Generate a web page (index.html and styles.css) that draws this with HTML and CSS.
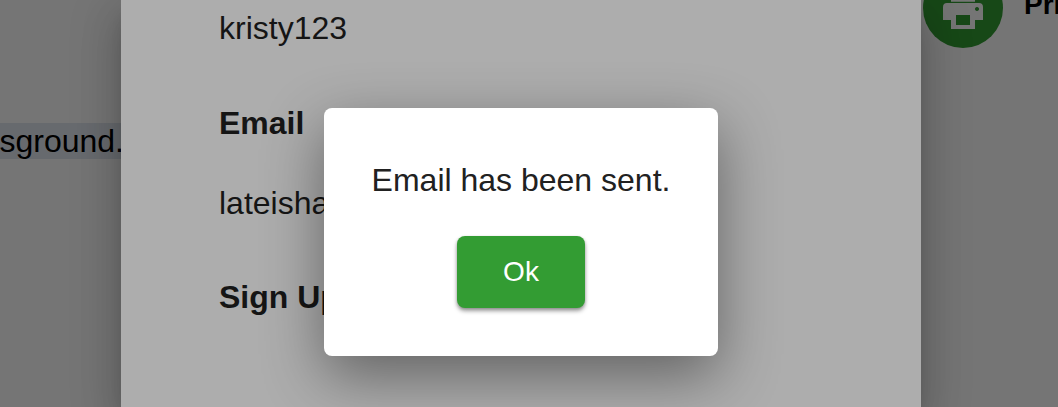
FILE: index.html
```html
<!DOCTYPE html>
<html lang="en">
<head>
<meta charset="utf-8">
<title>Profile</title>
<link rel="stylesheet" href="styles.css">
</head>
<body>
<div class="page">
  <div class="left"><p class="intro"><span class="hl">tsground.</span></p></div>
  <main class="panel">
    <p class="value first">kristy123</p>
    <h2 class="label">Email</h2>
    <p class="value">lateisha</p>
    <h2 class="label">Sign Up</h2>
  </main>
  <div class="right">
    <div class="fab">
      <svg class="print" viewBox="0 0 40 40" aria-hidden="true"><path fill-rule="evenodd" d="M8 0h24v12.700H8zM4 14h32a4 4 0 0 1 4 4v13h-8v9H8v-9H0V18a4 4 0 0 1 4-4zM13 26v10h14V26zM34 18a2 2 0 1 0 .01 0z"/></svg>
    </div>
    <strong class="print-label">Print</strong>
  </div>
  <div class="scrim"></div>
  <div class="scrim top">
    <div class="dialog">
      <p class="msg">Email has been sent.</p>
      <button class="ok">Ok</button>
    </div>
  </div>
</div>
</body>
</html>
```
FILE: styles.css
```css
* { box-sizing: border-box; }
html, body { margin: 0; height: 100%; }
body { overflow: hidden; background: #fff; font-family: "Liberation Sans", Arial, sans-serif; font-size: 32px; color: #000; }
.page { display: flex; width: 1058px; height: 407px; position: relative; overflow: hidden; }
.left { width: 121px; flex: none; overflow: hidden; display: flex; justify-content: flex-end; }
.intro { margin: 123px -3px 0 0; flex: none; line-height: 36px; }
.hl { background: #e2e7f1; }
.panel { width: 800px; flex: none; position: relative; z-index: 2; background: #fff; color: #1f1f1f; padding: 10px 98px 0; box-shadow: 0 11px 15px -7px rgba(0,0,0,.2), 0 24px 38px 3px rgba(0,0,0,.14), 0 9px 46px 8px rgba(0,0,0,.12); }
.value { margin: 0 0 57px; line-height: 37px; }
.label { margin: 0 0 43px; font-size: 32px; line-height: 37px; font-weight: 700; }
.first { margin-bottom: 58px; }
.right { flex: 1; display: flex; gap: 21px; padding-left: 2px; align-items: flex-start; }
.fab { width: 80px; height: 80px; flex: none; margin-top: -32px; border-radius: 50%; background: #339c33; display: flex; align-items: center; justify-content: center; }
.print { width: 40px; height: 40px; fill: #fff; margin-top: 2px; }
.print-label { flex: none; font-size: 28px; line-height: 9px; font-weight: 700; }
.scrim { position: absolute; inset: 0; z-index: 1; background: rgba(0,0,0,.32); }
.scrim.top { z-index: 3; }
.dialog { position: absolute; left: 324px; top: 108px; width: 394px; height: 248px; background: #fff; border-radius: 8px; padding: 52px 0 0; display: flex; flex-direction: column; align-items: center; box-shadow: 0 20px 60px rgba(0,0,0,.43); }
.msg { margin: 0 0 36px; color: #212121; line-height: 40px; }
.ok { width: 128px; height: 72px; border: 0; border-radius: 8px; padding: 0; background: #339c33; color: #fff; font: 28px "Liberation Sans", Arial, sans-serif; box-shadow: 0 3px 4px rgba(0,0,0,.38), 0 1px 3px rgba(0,0,0,.14); }
```
